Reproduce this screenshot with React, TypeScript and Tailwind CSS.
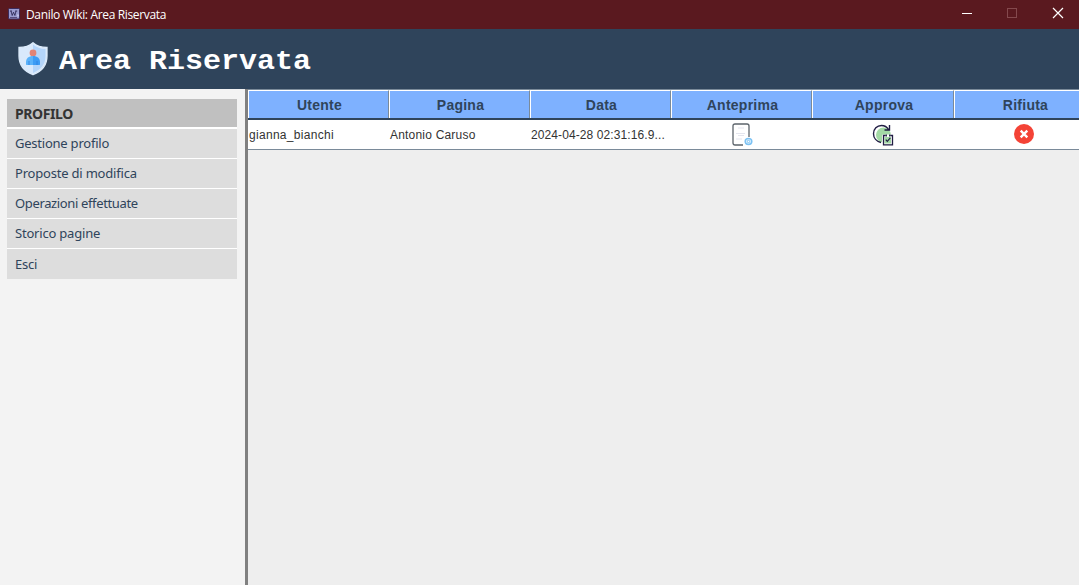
import React from "react";

const menuItems = [
  { label: "Gestione profilo", tracking: "tracking-[-0.23px]" },
  { label: "Proposte di modifica", tracking: "tracking-[-0.2px]" },
  { label: "Operazioni effettuate", tracking: "tracking-[-0.36px]" },
  { label: "Storico pagine", tracking: "tracking-[-0.2px]" },
];

const columns = ["Utente", "Pagina", "Data", "Anteprima", "Approva", "Rifiuta"];

function AppIcon() {
  return (
    <svg width="12" height="12" viewBox="0 0 12 12" className="mb-[2px] shrink-0">
      <rect x="0.5" y="0.5" width="11" height="10.5" rx="1" fill="#9b9bd0" stroke="#3b2b5c" />
      <path d="M2 3h2M3 3l1.2 4.5L5.500 4.200 6.900 7.500 8 3M7.200 3h2" fill="none" stroke="#25204d" strokeWidth=".8" />
      <path d="M2 9.500h7" stroke="#3b2b5c" strokeWidth=".7" />
      <path d="M10 6.500v2" stroke="#e6e6fa" />
    </svg>
  );
}

function ShieldIcon() {
  return (
    <svg width="30" height="34" viewBox="0 0 30 34" className="shrink-0">
      <path d="M15 .8C11.500 4 6.500 5.500 1 5.500V14c0 9 5.500 15.500 14 18.700C23.500 29.500 29 23 29 14V5.500C23.500 5.500 18.500 4 15 .8Z" fill="#d9e9fc" />
      <path d="M15 2.500C18.500 5.500 22.500 6.800 27.500 7v7c0 8-4.500 13.500-12.500 17Z" fill="#b4d5fa" />
      <path d="M15 .8C11.500 4 6.500 5.500 1 5.500V14c0 9 5.500 15.500 14 18.700C23.500 29.500 29 23 29 14V5.500C23.500 5.500 18.500 4 15 .8Z" fill="none" stroke="#dcebfb" strokeWidth="1.300" />
      <circle cx="15" cy="11" r="3.400" fill="#e18477" />
      <path d="M8 22.500V20c0-3.800 2.800-6 7-6v9H8.500Z" fill="#5ab2fa" />
      <path d="M15 14c4.200 0 7 2.200 7 6v2.500l-.5.5H15Z" fill="#3d9cf5" />
      <path d="M11 19v4M19 19v4" stroke="#2f7fe0" strokeWidth=".8" />
    </svg>
  );
}

function PreviewIcon() {
  return (
    <svg width="22" height="24" viewBox="0 0 22 24">
      <path d="M12 22H4Q2 22 2 20V3Q2 1 4 1h12q2 0 2 2v11" fill="none" stroke="#5c646b" strokeWidth="1.300" />
      <path d="M7 5h6M5 10.500h9M7 12.500h6M5 16h6" stroke="#e4e5ee" strokeWidth="1" />
      <ellipse cx="17.500" cy="18.500" rx="3.300" ry="2.900" fill="#e6f5ff" stroke="#7cc2f3" strokeWidth="1.500" />
      <circle cx="17.500" cy="18.500" r="1.200" fill="#fff" stroke="#7cc2f3" strokeWidth="1" />
    </svg>
  );
}

function ApproveIcon() {
  return (
    <svg width="22" height="22" viewBox="0 0 22 22">
      <circle cx="11.500" cy="11" r="7.500" fill="#a3d9a5" />
      <path d="M9 18.500C4.500 17.500 1.500 14 1.500 9.800 1.500 5 5 1.500 9.500 1.500c3 0 5.500 1.500 7 4M17.500 1v5h-5" fill="none" stroke="#201d43" strokeWidth="1.400" />
      <rect x="10" y="10.500" width="11" height="11" rx="1" fill="#fff" />
      <rect x="12.500" y="13" width="6.500" height="6.500" fill="#a3d9a5" />
      <path d="M13.500 11.500h-2v9.300h9v-9.300h-2M14.300 10.500v2M17.700 10.500v2" fill="none" stroke="#201d43" strokeWidth="1.300" />
      <path d="M13.800 15.700l1.500 1.700 3-3.500" fill="none" stroke="#201d43" strokeWidth="1.200" />
    </svg>
  );
}

function RejectIcon() {
  return (
    <svg width="20" height="20" viewBox="0 0 20 20">
      <circle cx="10" cy="10" r="10" fill="#f44336" />
      <path d="M6.700 6.700l6.600 6.600M13.300 6.700l-6.600 6.600" stroke="#fff" strokeWidth="2.400" />
    </svg>
  );
}

export default function App() {
  return (
    <div className="flex h-[585px] w-[1079px] flex-col overflow-hidden bg-[#eeeeee] whitespace-nowrap">
      <div className="flex h-[29px] shrink-0 items-center bg-[#5a191f] pl-[8px] text-white">
        <AppIcon />
        <span className="ml-[6px] font-['Open_Sans','Noto_Sans',sans-serif] text-[12px] leading-[16px] tracking-[-0.34px]">
          Danilo Wiki: Area Riservata
        </span>
        <svg width="139" height="29" viewBox="0 0 139 29" className="ml-auto shrink-0" fill="none">
          <path d="M22 13.500h10" stroke="#fff" />
          <rect x="67.500" y="8.500" width="9" height="9" stroke="#84494d" />
          <path d="M113 8l10 10M123 8l-10 10" stroke="#fff" strokeWidth="1.200" />
        </svg>
      </div>

      <div className="flex h-[60px] shrink-0 items-center bg-[#2f445b] pl-[18px]">
        <ShieldIcon />
        <h1 className="mt-[5px] ml-[11px] scale-y-[0.92] font-['Courier_New','Liberation_Mono',monospace] text-[30px] leading-[34px] font-bold text-white">
          Area Riservata
        </h1>
      </div>

      <div className="flex min-h-0 flex-1">
        <nav className="w-[245px] shrink-0 bg-[#f3f3f3] pt-[10px] pr-[8px] pl-[7px] font-['Noto_Sans',sans-serif] text-[13px] text-[#2f445b]">
          <div className="h-[30px] border-b-2 border-white bg-[#c0c0c0] pl-[8px] text-[14px] leading-[29px] font-bold tracking-[-0.4px] text-[#333333]">
            PROFILO
          </div>
          {menuItems.map((item) => (
            <div key={item.label} className={`h-[30px] border-b border-white bg-[#dddddd] pl-[8px] leading-[29px] ${item.tracking}`}>
              {item.label}
            </div>
          ))}
          <div className="h-[30px] bg-[#dddddd] pl-[8px] leading-[30px] tracking-[-0.2px]">Esci</div>
        </nav>

        <div className="w-[3px] shrink-0 bg-[#808080]" />

        <main className="min-w-0 flex-1 overflow-hidden font-['Liberation_Sans',Arial,sans-serif]">
          <div className="grid h-[31px] w-[847px] grid-cols-[141px_141px_141px_141px_142px_141px] border-t border-b-2 border-t-[#7a8a99] border-b-[#2f445b]">
            {columns.map((name) => (
              <div
                key={name}
                className="h-[28px] border-t border-r border-l border-t-white border-r-[#7a8a99] border-l-white bg-[#7eb1ff] pl-[2px] text-center text-[14px] leading-[28px] font-bold tracking-[0.25px] text-[#2f445b]"
              >
                {name}
              </div>
            ))}
          </div>
          <div className="grid h-[30px] w-[847px] grid-cols-[141px_141px_141px_141px_142px_141px] items-center border-b border-[#7a8a99] bg-white text-[12px] leading-[27px] text-[#333333]">
            <span className="pt-[2px] pl-[1px] tracking-[0.3px]">gianna_bianchi</span>
            <span className="pt-[2px] pl-[1px] tracking-[0.2px]">Antonio Caruso</span>
            <span className="pt-[2px] pl-[1px] tracking-[0.1px]">2024-04-28 02:31:16.9...</span>
            <span className="flex justify-center">
              <PreviewIcon />
            </span>
            <span className="flex justify-center">
              <ApproveIcon />
            </span>
            <span className="flex justify-center pr-[1px] pb-[1px]">
              <RejectIcon />
            </span>
          </div>
        </main>
      </div>
    </div>
  );
}
